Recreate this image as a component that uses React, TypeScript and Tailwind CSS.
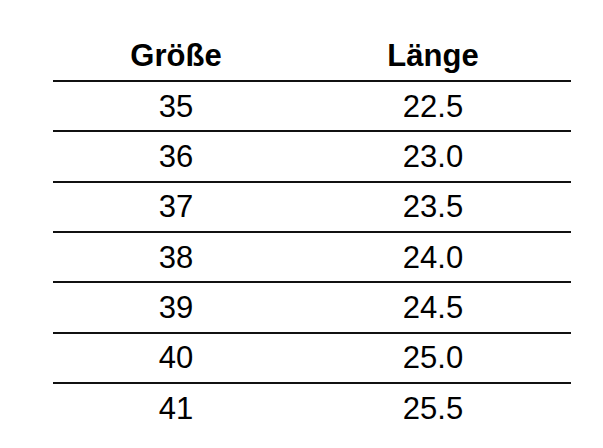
const rows: [string, string][] = [
  ['35', '22.5'],
  ['36', '23.0'],
  ['37', '23.5'],
  ['38', '24.0'],
  ['39', '24.5'],
  ['40', '25.0'],
  ['41', '25.5'],
];

export default function App() {
  return (
    <div className="h-[448px] w-[603px] bg-white pt-[30px] pl-[53px] font-['Liberation_Sans',Arial,sans-serif] text-black">
      <div className="w-[518px]">
        <div className="grid h-[50px] grid-cols-[246px_1fr] items-center pr-[4px] text-[31px] font-bold leading-none">
          <div className="text-center">Größe</div>
          <div className="text-center">Länge</div>
        </div>
        {rows.map(([size, len]) => (
          <div
            key={size}
            className="grid h-[50.33px] grid-cols-[246px_1fr] items-center border-t-2 border-[#111] pr-[4px] text-[31px] leading-none"
          >
            <div className="text-center">{size}</div>
            <div className="text-center">{len}</div>
          </div>
        ))}
      </div>
    </div>
  );
}
